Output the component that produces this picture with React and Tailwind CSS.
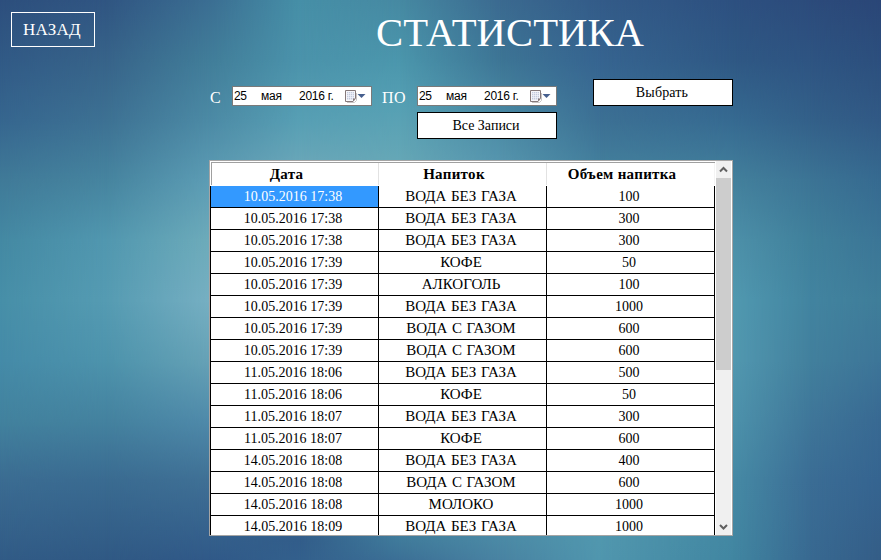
const records = [
  ["10.05.2016 17:38", "ВОДА БЕЗ ГАЗА", "100"],
  ["10.05.2016 17:38", "ВОДА БЕЗ ГАЗА", "300"],
  ["10.05.2016 17:38", "ВОДА БЕЗ ГАЗА", "300"],
  ["10.05.2016 17:39", "КОФЕ", "50"],
  ["10.05.2016 17:39", "АЛКОГОЛЬ", "100"],
  ["10.05.2016 17:39", "ВОДА БЕЗ ГАЗА", "1000"],
  ["10.05.2016 17:39", "ВОДА С ГАЗОМ", "600"],
  ["10.05.2016 17:39", "ВОДА С ГАЗОМ", "600"],
  ["11.05.2016 18:06", "ВОДА БЕЗ ГАЗА", "500"],
  ["11.05.2016 18:06", "КОФЕ", "50"],
  ["11.05.2016 18:07", "ВОДА БЕЗ ГАЗА", "300"],
  ["11.05.2016 18:07", "КОФЕ", "600"],
  ["14.05.2016 18:08", "ВОДА БЕЗ ГАЗА", "400"],
  ["14.05.2016 18:08", "ВОДА С ГАЗОМ", "600"],
  ["14.05.2016 18:08", "МОЛОКО", "1000"],
  ["14.05.2016 18:09", "ВОДА БЕЗ ГАЗА", "1000"],
];

// Vertical gradients, each fading in over the one before it from left to right.
const backdrop = [
  "bg-[linear-gradient(to_bottom,#2d4f7d_0px,#315a86_60px,#36668f_120px,#407a98_180px,#4489a3_240px,#478fa8_300px,#458ba8_360px,#42829e_420px,#3b6c92_480px,#315b86_560px)]",
  "bg-[linear-gradient(to_bottom,#305582_0px,#376389_60px,#3d7193_120px,#46849f_180px,#5197af_240px,#559bb2_300px,#4d93ac_360px,#44829f_420px,#3a6b91_480px,#305984_560px)] [mask-image:linear-gradient(to_right,transparent_0px,black_105px)]",
  "bg-[linear-gradient(to_bottom,#3b6e92_0px,#417d99_60px,#4c8aa5_120px,#5c9cb4_180px,#6dabba_240px,#76afc2_300px,#66a2b6_360px,#4f8aaa_420px,#3f7095_480px,#305988_560px)] [mask-image:linear-gradient(to_right,transparent_105px,black_209px)]",
  "bg-[linear-gradient(to_bottom,#468fa7_0px,#4b93ab_60px,#579fb4_120px,#68a6b8_160px,#6dabba_240px,#325d8a_540px,#33608c_560px)] [mask-image:linear-gradient(to_right,transparent_209px,black_300px)]",
  "bg-[linear-gradient(to_bottom,#4689a2_0px,#4b96ac_60px,#549fb3_100px,#65a7b6_160px,#407b9b_540px,#3c7096_560px)] [mask-image:linear-gradient(to_right,transparent_300px,black_400px)]",
  "bg-[linear-gradient(to_bottom,#3b6a90_0px,#3d7595_60px,#4a8aa4_120px,#5594ad_160px,#4b89a5_540px,#4983a2_560px)] [mask-image:linear-gradient(to_right,transparent_400px,black_500px)]",
  "bg-[linear-gradient(to_bottom,#335b88_0px,#366490_60px,#3c7094_120px,#427d9b_160px,#5197ae_540px,#5096ae_560px)] [mask-image:linear-gradient(to_right,transparent_500px,black_600px)]",
  "bg-[linear-gradient(to_bottom,#2d5080_0px,#2f5884_60px,#366a91_120px,#43809c_180px,#4d90a9_240px,#5199b0_300px,#5298b0_360px,#4d92ab_420px,#468aa5_480px,#4186a1_560px)] [mask-image:linear-gradient(to_right,transparent_600px,black_733px)]",
  "bg-[linear-gradient(to_bottom,#2c4b7b_0px,#2e5482_60px,#336089_120px,#3c7495_180px,#40809b_240px,#4284a0_300px,#42809d_360px,#3f7699_420px,#3b6d95_480px,#386991_560px)] [mask-image:linear-gradient(to_right,transparent_733px,black_810px)]",
  "bg-[linear-gradient(to_bottom,#2a4677_0px,#2c4f7d_60px,#315985_120px,#366a90_180px,#3b7596_240px,#3f7d99_300px,#3d7598_360px,#386992_420px,#356490_480px,#345d87_560px)] [mask-image:linear-gradient(to_right,transparent_810px,black_881px)]",
];

const cellStyles = [
  "text-[14px] pr-[3px]",
  "text-[15px] pr-[3px] [word-spacing:0.8px]",
  "text-[14px] pr-[3px]",
];

function DatePicker() {
  return (
    <div className="flex h-5 w-[140px] items-center border border-[#7a7a7a] bg-white font-['Liberation_Sans',sans-serif] text-[12px] leading-none whitespace-nowrap text-black">
      <span className="w-7 pl-px tracking-[-0.4px]">25</span>
      <span className="w-[38px] tracking-[-0.2px]">мая</span>
      <span className="w-[45px] tracking-[-0.25px]">2016 г.</span>
      <svg className="h-4 w-[24px] shrink-0" viewBox="0 0 24 16">
        <path d="M3 14.5h7.5l2-2V5" fill="none" stroke="#c9c5c5" />
        <path d="M1.5 2.500h10v8l-2.500 3H1.500z" fill="#f7f7fb" stroke="#85797a" />
        <path d="M3 4h7v7.500H3z" fill="#c3cadd" />
        <path d="M3 5.500h7M3 7.500h7M3 9.500h7M4.500 4v8M6.500 4v8M8.500 4v8" stroke="#f2f4fa" strokeWidth="0.7" />
        <path d="M9 13.500v-3h2.500z" fill="#85797a" />
        <path d="M13.500 6h8l-4 4z" fill="#465f8e" />
      </svg>
    </div>
  );
}

function Header({ children, size }) {
  return (
    <div className={`flex items-center justify-center border-r ${size}`}>
      {children}
    </div>
  );
}

export default function App() {
  return (
    <div className="grid h-[560px] w-[881px] overflow-hidden font-['Liberation_Serif',serif]">
      {backdrop.map((layer) => (
        <div key={layer} className={`col-start-1 row-start-1 h-[560px] w-[881px] ${layer}`} />
      ))}
      <div className="z-10 col-start-1 row-start-1 h-[560px] w-[881px]">
        <header className="flex h-[60px] items-start pl-[11px] text-white">
          <button className="mt-3 flex h-[35px] w-[84px] items-center justify-center border border-white pr-0.5 text-[17px] leading-none tracking-[0.3px]">
            НАЗАД
          </button>
          <h1 className="ml-[281px] pt-[9px] text-[40.7px] leading-[47px] whitespace-nowrap">СТАТИСТИКА</h1>
        </header>
        <section className="flex h-[100px] items-start pl-[210px] text-[16px] leading-none text-white">
          <span className="mt-[30px] w-[22px]">С</span>
          <div className="mt-[26px]"><DatePicker /></div>
          <span className="mt-[30px] ml-2.5 w-[35px] tracking-[0.4px]">ПО</span>
          <div className="mt-[26px] flex flex-col gap-1.5">
            <DatePicker />
            <button className="flex h-[27px] w-[140px] items-center justify-center border border-black bg-white pr-0.5 text-[14px] text-black">Все Записи</button>
          </div>
          <button className="mt-[19px] ml-9 flex h-[27px] w-[140px] items-center justify-center border border-black bg-white pr-0.5 text-[14px] tracking-[0.15px] text-black">Выбрать</button>
        </section>
        <main className="ml-[209px] flex h-[376px] w-[524px] overflow-hidden border border-[#a5a5a5] bg-white text-[15px] leading-none text-black">
          <div className="w-[505px] shrink-0">
            <div className="flex h-[25px] pt-px pl-px">
              <div className="flex h-[23px] w-full border-t border-l border-[#a0a0a0] font-bold tracking-[0.3px]">
                <Header size="w-[167px] pr-[17px] border-[#e2e2e2]">Дата</Header>
                <Header size="w-[168px] pr-[17px] border-[#e2e2e2]">Напиток</Header>
                <Header size="w-[168px] pr-[17px] border-[#f4f4f4]">Объем напитка</Header>
              </div>
            </div>
            {records.map((row, i) => (
              <div key={i} className="flex h-[22px] border-l border-black">
                {row.map((value, j) => (
                  <div
                    key={j}
                    className={`flex w-[168px] items-center justify-center border-r border-b border-black ${cellStyles[j]} ${i === 0 && j === 0 ? "bg-[#3399ff] text-white" : ""}`}
                  >
                    {value}
                  </div>
                ))}
              </div>
            ))}
          </div>
          <div className="flex w-[17px] flex-col border-x border-x-white bg-[#f0f0f0]">
            <svg className="h-[17px] w-[15px] shrink-0" viewBox="0 0 15 17">
              <path d="M4 10.500 7.500 7l3.500 3.500" fill="none" stroke="#606060" strokeWidth="2" />
            </svg>
            <div className="h-[192px] bg-[#cdcdcd]" />
            <svg className="mt-auto h-[17px] w-[15px] shrink-0" viewBox="0 0 15 17">
              <path d="M4 7l3.500 3.500L11 7" fill="none" stroke="#606060" strokeWidth="2" />
            </svg>
          </div>
        </main>
      </div>
    </div>
  );
}
